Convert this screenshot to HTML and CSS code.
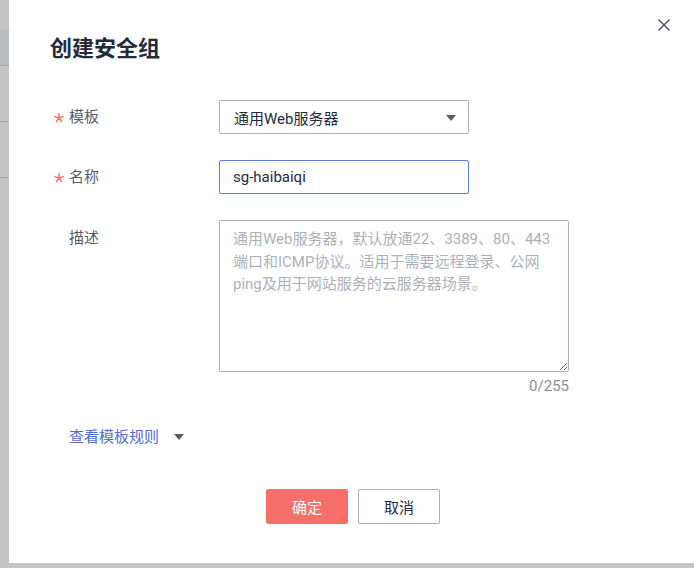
FILE: index.html
```html
<!DOCTYPE html>
<html lang="zh-CN">
<head>
<meta charset="utf-8">
<title>创建安全组</title>
<link rel="stylesheet" href="styles.css">
</head>
<body>
<div class="page">
  <div class="backdrop">
    <div class="band"></div>
    <div class="bline l1"></div>
    <div class="bline l2"></div>
    <div class="bline l3"></div>
  </div>
  <div class="dialog">
    <button class="close" aria-label="关闭">
      <svg width="14" height="14" viewBox="0 0 14 14"><path d="M1.5 1.5 L12.5 12.5 M12.5 1.5 L1.5 12.5" stroke="#575d6c" stroke-width="1.6" fill="none"/></svg>
    </button>
    <h1 class="title">创建安全组</h1>
    <div class="form">
      <div class="row">
        <label class="label"><svg class="star" width="10" height="10" viewBox="0 0 10 10"><path d="M5 5 L5 0.5 M5 5 L9.3 3.6 M5 5 L7.6 8.7 M5 5 L2.4 8.7 M5 5 L0.7 3.6" stroke="#f66f6a" stroke-width="1.4" stroke-linecap="round" fill="none"/></svg>模板</label>
        <div class="select">
          <span>通用Web服务器</span>
          <svg class="caret" width="10" height="6" viewBox="0 0 10 6"><path d="M0 0 H10 L5 6 Z" fill="#575d6c"/></svg>
        </div>
      </div>
      <div class="row">
        <label class="label"><svg class="star" width="10" height="10" viewBox="0 0 10 10"><path d="M5 5 L5 0.5 M5 5 L9.3 3.6 M5 5 L7.6 8.7 M5 5 L2.4 8.7 M5 5 L0.7 3.6" stroke="#f66f6a" stroke-width="1.4" stroke-linecap="round" fill="none"/></svg>名称</label>
        <input class="input" type="text" value="sg-haibaiqi">
      </div>
      <div class="row top">
        <label class="label plain">描述</label>
        <div class="area-wrap">
          <textarea class="area" placeholder="通用Web服务器，默认放通22、3389、80、443&#10;端口和ICMP协议。适用于需要远程登录、公网&#10;ping及用于网站服务的云服务器场景。"></textarea>
          <div class="count">0/255</div>
        </div>
      </div>
    </div>
    <div class="rules">
      <a class="link">查看模板规则</a>
      <svg class="caret2" width="10" height="6" viewBox="0 0 10 6"><path d="M0 0 H10 L5 6 Z" fill="#575d6c"/></svg>
    </div>
    <div class="actions">
      <button class="btn primary">确定</button>
      <button class="btn">取消</button>
    </div>
  </div>
</div>
</body>
</html>
```

FILE: styles.css
```css
* { box-sizing: border-box; }
html, body { margin: 0; padding: 0; }
body {
  width: 694px;
  height: 568px;
  overflow: hidden;
  background: #c4c4c4;
  font-family: Roboto, "Noto Sans CJK SC", sans-serif;
}
.page {
  display: flex;
  height: 563px;
}
.backdrop {
  width: 9px;
  position: relative;
  background: #c4c4c4;
}
.band {
  position: absolute;
  left: 0; right: 0;
  top: 30px; height: 35px;
  background: #babbc1;
}
.bline {
  position: absolute;
  left: 0; right: 0;
  height: 1px;
  background: #a9a9a9;
}
.l1 { top: 65px; }
.l2 { top: 121px; }
.l3 { top: 177px; }
.dialog {
  flex: 1;
  background: #fff;
  position: relative;
  padding: 34px 0 0 41px;
}
.close {
  position: absolute;
  top: 18px;
  left: 648px;
  width: 14px;
  height: 14px;
  padding: 0;
  border: 0;
  background: none;
  line-height: 0;
}
.title {
  margin: 0;
  font-size: 22px;
  line-height: 30px;
  font-weight: 700;
  color: #252b3a;
}
.form {
  margin-top: 36px;
  display: flex;
  flex-direction: column;
  gap: 26px;
}
.row {
  display: flex;
  align-items: center;
}
.row.top { align-items: flex-start; }
.label {
  width: 169px;
  padding-left: 4px;
  font-size: 15px;
  line-height: 20px;
  color: #575d6c;
  display: flex;
  align-items: center;
}
.label.plain { padding-left: 19px; margin-top: 8px; }
.star {
  margin-right: 5px;
  margin-top: 1px;
}
.select, .input {
  width: 250px;
  height: 34px;
  border: 1px solid #adb0b8;
  border-radius: 2px;
  font-size: 15px;
  color: #252b3a;
  padding: 0 12px 0 14px;
  font-family: inherit;
}
.select {
  display: flex;
  align-items: center;
  justify-content: space-between;
}
.caret { margin-top: 1px; }
.input {
  border-color: #5e7ce0;
  outline: none;
  padding-left: 13px;
}
.area-wrap {
  display: flex;
  flex-direction: column;
  align-items: flex-end;
}
.area {
  display: block;
  width: 350px;
  height: 152px;
  border: 1px solid #adb0b8;
  border-radius: 2px;
  padding: 7px 4px 0 13px;
  font-family: inherit;
  font-size: 15px;
  line-height: 22.5px;
  color: #252b3a;
  resize: vertical;
  outline: none;
  margin: 0;
}
.area::placeholder { color: #adb0b8; }
.count {
  margin-top: 4px;
  font-size: 15px;
  line-height: 20px;
  color: #8a8e99;
}
.rules {
  margin-top: 31px;
  padding-left: 19px;
  display: flex;
  align-items: center;
  gap: 15px;
}
.link {
  font-size: 15px;
  line-height: 20px;
  color: #526ecc;
  cursor: pointer;
}
.caret2 { margin-top: -1px; }
.actions {
  margin-top: 42px;
  padding-left: 216px;
  display: flex;
  gap: 10px;
}
.btn {
  width: 82px;
  height: 35px;
  border: 1px solid #adb0b8;
  border-radius: 2px;
  background: #fff;
  font-family: inherit;
  font-size: 15px;
  color: #252b3a;
  padding: 0;
}
.btn.primary {
  background: #f66f6a;
  border-color: #f66f6a;
  color: #fff;
}
```
